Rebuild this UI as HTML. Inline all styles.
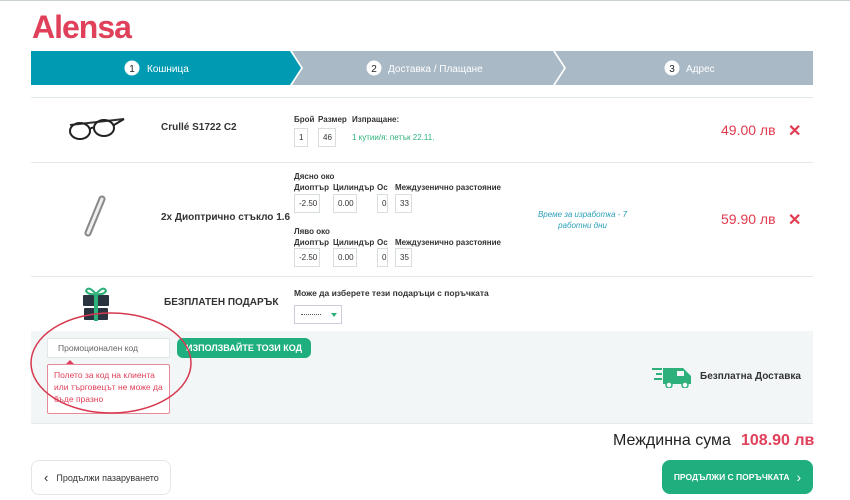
<!DOCTYPE html>
<html><head><meta charset="utf-8"><style>
*{margin:0;padding:0;box-sizing:border-box}
body{width:850px;height:500px;background:#fff;font-family:"Liberation Sans",sans-serif;color:#222;position:relative;overflow:hidden;font-size:9px}
.a{position:absolute}
.line{position:absolute;left:31px;width:782px;height:1px;background:#e3eaec}
.box{position:absolute;border:1px solid #d8dde0;height:19px;font-size:8px;line-height:17px;padding-left:4px;color:#333;background:#fff}
.lbl{position:absolute;font-size:8px;font-weight:bold;color:#333}
.x{position:absolute;color:#e23a4f;font-size:16px;font-weight:bold}
.price{position:absolute;color:#e23a4f;font-size:14px}
</style></head><body>
<div class="a" style="left:0;top:0;width:850px;height:1px;background:#c8d0d4"></div>
<div class="a" style="left:32px;top:9px;font-size:32px;font-weight:bold;color:#e0405a;letter-spacing:-1px">Alensa</div>
<svg class="a" style="left:31px;top:51px" width="782" height="34">
<polygon points="0,0 259,0 270,17 259,34 0,34" fill="#009bb2"/>
<polygon points="261,0 522,0 533,17 522,34 261,34 272,17" fill="#a9b9c6"/>
<polygon points="524,0 782,0 782,34 524,34 535,17" fill="#a9b9c6"/>
<circle cx="101" cy="17" r="7.5" fill="#fff"/><text x="101" y="21" font-size="10" text-anchor="middle" fill="#222" font-family="Liberation Sans">1</text>
<text x="116" y="21" font-size="10" fill="#fff" font-family="Liberation Sans">Кошница</text>
<circle cx="343" cy="17" r="7.5" fill="#fff"/><text x="343" y="21" font-size="10" text-anchor="middle" fill="#222" font-family="Liberation Sans">2</text>
<text x="357" y="21" font-size="10" fill="#fff" font-family="Liberation Sans">Доставка / Плащане</text>
<circle cx="641" cy="17" r="7.5" fill="#fff"/><text x="641" y="21" font-size="10" text-anchor="middle" fill="#222" font-family="Liberation Sans">3</text>
<text x="655" y="21" font-size="10" fill="#fff" font-family="Liberation Sans">Адрес</text>
</svg>
<div class="line" style="top:97px"></div>
<svg class="a" style="left:66px;top:114px" width="62" height="30"><path d="M4 11 L58 5" stroke="#333" stroke-width="2" fill="none"/><ellipse cx="14" cy="17" rx="10" ry="8" stroke="#222" stroke-width="2" fill="none"/><ellipse cx="38" cy="14" rx="10" ry="8" stroke="#222" stroke-width="2" fill="none"/><path d="M24 15 Q26 13 28 14 M48 11 L58 5" stroke="#222" stroke-width="2" fill="none"/></svg>
<div class="a" style="left:161px;top:122px;font-size:10px;font-weight:bold;color:#333">Crullé S1722 C2</div>
<div class="lbl" style="left:294px;top:115px">Брой</div><div class="lbl" style="left:318px;top:115px">Размер</div><div class="lbl" style="left:352px;top:115px">Изпращане:</div>
<div class="box" style="left:294px;top:128px;width:14px">1</div><div class="box" style="left:318px;top:128px;width:18px">46</div>
<div class="a" style="left:352px;top:133px;font-size:8px;color:#2db07a">1 кутии/я: петък 22.11.</div>
<div class="price" style="left:721px;top:122px">49.00 лв</div><div class="x" style="left:788px;top:121px">✕</div>
<div class="line" style="top:162px"></div>
<svg class="a" style="left:80px;top:195px" width="30" height="45"><path d="M22 4 L8 38" stroke="#888" stroke-width="7" stroke-linecap="round"/><path d="M22 4 L8 38" stroke="#eee" stroke-width="3" stroke-linecap="round"/></svg>
<div class="a" style="left:161px;top:212px;font-size:10px;font-weight:bold;color:#333">2x Диоптрично стъкло 1.6</div>
<div class="lbl" style="left:294px;top:172px">Дясно око</div>
<div class="lbl" style="left:294px;top:183px">Диоптър</div><div class="lbl" style="left:333px;top:183px">Цилиндър</div><div class="lbl" style="left:377px;top:183px">Ос</div><div class="lbl" style="left:395px;top:183px">Междузенично разстояние</div>
<div class="box" style="left:294px;top:194px;width:26px">-2.50</div><div class="box" style="left:333px;top:194px;width:24px">0.00</div><div class="box" style="left:377px;top:194px;width:11px">0</div><div class="box" style="left:395px;top:194px;width:17px">33</div>
<div class="lbl" style="left:294px;top:227px">Ляво око</div>
<div class="lbl" style="left:294px;top:238px">Диоптър</div><div class="lbl" style="left:333px;top:238px">Цилиндър</div><div class="lbl" style="left:377px;top:238px">Ос</div><div class="lbl" style="left:395px;top:238px">Междузенично разстояние</div>
<div class="box" style="left:294px;top:248px;width:26px">-2.50</div><div class="box" style="left:333px;top:248px;width:24px">0.00</div><div class="box" style="left:377px;top:248px;width:11px">0</div><div class="box" style="left:395px;top:248px;width:17px">35</div>
<div class="a" style="left:530px;top:209px;width:105px;text-align:center;font-size:8px;font-style:italic;color:#2a9fb8;line-height:11px">Време за изработка - 7 работни дни</div>
<div class="price" style="left:721px;top:211px">59.90 лв</div><div class="x" style="left:788px;top:210px">✕</div>
<div class="line" style="top:276px"></div>
<svg class="a" style="left:82px;top:285px" width="28" height="36"><rect x="1" y="10" width="26" height="11" rx="1" fill="#2a3340"/><rect x="2" y="23" width="24" height="12" rx="1" fill="#2a3340"/><rect x="12" y="8" width="4" height="28" fill="#2db07a"/><path d="M14 9 Q6 0 4 6 Q6 10 14 9 Q22 0 24 6 Q22 10 14 9" stroke="#2db07a" stroke-width="2" fill="none"/></svg>
<div class="a" style="left:164px;top:297px;font-size:10px;font-weight:bold;color:#333">БЕЗПЛАТЕН ПОДАРЪК</div>
<div class="lbl" style="left:294px;top:288px;font-size:8.5px">Може да изберете тези подаръци с поръчката</div>
<div class="a" style="left:294px;top:305px;width:48px;height:19px;border:1px solid #ccd;background:#fff"><div class="a" style="left:6px;top:8px;width:20px;border-top:1px dotted #555"></div><div class="a" style="left:36px;top:7px;border:3.5px solid transparent;border-top:4px solid #2db07a"></div></div>
<div class="a" style="left:31px;top:331px;width:782px;height:93px;background:#f2f6f7;border-bottom:1px solid #e3eaec"></div>
<div class="a" style="left:47px;top:338px;width:123px;height:20px;background:#fff;border:1px solid #e3e6e8;font-size:8.5px;color:#666;line-height:18px;padding-left:10px">Промоционален код</div>
<div class="a" style="left:177px;top:338px;width:134px;height:20px;background:#1fae7e;border-radius:6px;color:#fff;font-weight:bold;font-size:9px;line-height:20px;text-align:center">ИЗПОЛЗВАЙТЕ ТОЗИ КОД</div>
<div class="a" style="left:47px;top:364px;width:123px;height:50px;background:#fff;border:1px solid #e8899a;border-radius:2px;color:#e0405a;font-size:8.5px;line-height:12px;padding:4px 6px">Полето за код на клиента или търговецът не може да бъде празно</div>
<div class="a" style="left:66px;top:360px;border:4px solid transparent;border-bottom:4px solid #e0405a;border-top:0"></div>
<svg class="a" style="left:27px;top:310px" width="170" height="106"><ellipse cx="84" cy="53" rx="80" ry="50" stroke="#d7384f" stroke-width="1.5" fill="none"/></svg>
<svg class="a" style="left:650px;top:366px" width="44" height="22"><path d="M2 3h10M6 8h6M4 13h8" stroke="#2db07a" stroke-width="2"/><path d="M13 2h16l4 0 8 8v8H13z" fill="#2db07a"/><rect x="27" y="5" width="7" height="5" fill="#f2f6f7"/><circle cx="19" cy="19" r="3" fill="#fff" stroke="#2db07a" stroke-width="1.5"/><circle cx="35" cy="19" r="3" fill="#fff" stroke="#2db07a" stroke-width="1.5"/></svg>
<div class="a" style="left:700px;top:371px;font-size:10px;font-weight:bold;color:#333">Безплатна Доставка</div>
<div class="a" style="left:613px;top:432px;font-size:16px;color:#222">Междинна сума</div>
<div class="a" style="left:741px;top:432px;font-size:16px;font-weight:bold;color:#e0405a">108.90 лв</div>
<div class="a" style="left:31px;top:460px;width:140px;height:35px;border:1px solid #e3e6e8;border-radius:8px;font-size:9px;color:#333;display:flex;align-items:center;padding-left:12px"><span style="font-size:13px;margin-right:8px">‹</span>Продължи пазаруването</div>
<div class="a" style="left:662px;top:460px;width:151px;height:34px;background:#1fae7e;border-radius:8px;color:#fff;font-size:8.5px;font-weight:bold;display:flex;align-items:center;justify-content:center">ПРОДЪЛЖИ С ПОРЪЧКАТА<span style="font-size:14px;margin-left:7px;font-weight:normal">›</span></div>
</body></html>
